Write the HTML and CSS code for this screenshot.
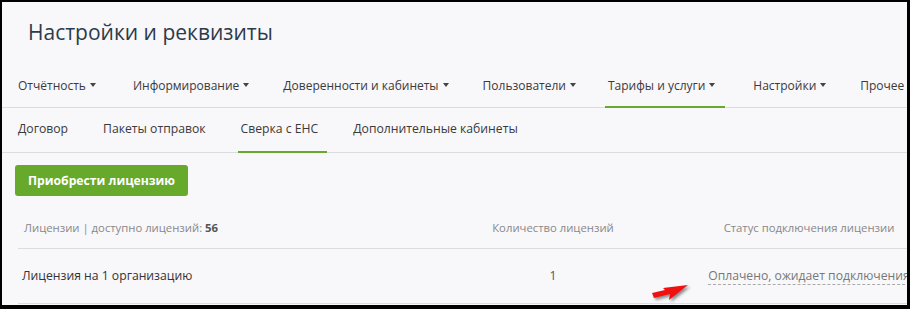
FILE: index.html
```html
<!DOCTYPE html>
<html lang="ru">
<head>
  <meta charset="UTF-8">
  <title>Настройки и реквизиты</title>
  <link rel="stylesheet" href="styles.css">
</head>
<body>
  <div class="page">
    <h1 class="title">Настройки и реквизиты</h1>

    <nav class="tabs tabs-main">
      <a class="tab has-menu">Отчётность</a>
      <a class="tab has-menu">Информирование</a>
      <a class="tab has-menu">Доверенности и кабинеты</a>
      <a class="tab has-menu">Пользователи</a>
      <a class="tab has-menu active">Тарифы и услуги</a>
      <a class="tab has-menu">Настройки</a>
      <a class="tab">Прочее</a>
    </nav>

    <nav class="tabs tabs-sub">
      <a class="tab">Договор</a>
      <a class="tab">Пакеты отправок</a>
      <a class="tab active">Сверка с ЕНС</a>
      <a class="tab">Дополнительные кабинеты</a>
    </nav>

    <div class="actions">
      <button class="btn-buy">Приобрести лицензию</button>
    </div>

    <table class="licenses">
      <thead>
        <tr>
          <th class="col-name">Лицензии | доступно лицензий: <b>56</b></th>
          <th class="col-count">Количество лицензий</th>
          <th class="col-status">Статус подключения лицензии</th>
        </tr>
      </thead>
      <tbody>
        <tr>
          <td class="col-name">Лицензия на 1 организацию</td>
          <td class="col-count">1</td>
          <td class="col-status"><span class="status">Оплачено, ожидает подключения</span></td>
        </tr>
      </tbody>
    </table>

    <!-- стрелка-указатель поверх таблицы -->
    <svg class="pointer" width="48" height="26" viewBox="0 0 48 26">
      <polygon points="6,13 19,10 17,8 42,5 23,20 24,14 8,18" fill="#f01010"/>
    </svg>
  </div>
</body>
</html>
```

FILE: styles.css
```css
:root {
  --bg-color: #f8f7fa;
  --text-color: #333;
  --muted-color: #888;
  --line-color: #dcdce0;
  --green: #67a92b;
}

html, body {
  margin: 0;
  background: #000;
}

.page {
  position: relative;
  margin: 2px 3px 0 2px;
  height: 303px;
  overflow: hidden;
  background: var(--bg-color);
  font-family: 'Open Sans', 'Noto Sans', sans-serif;
  color: var(--text-color);
}

.title {
  margin: 0 0 0 26px;
  padding-top: 15px;
  font-size: 21px;
  font-weight: 400;
  line-height: 30px;
  color: #2c3b4a;
}

.tabs {
  display: flex;
  padding-left: 13px;
  border-bottom: 1px solid var(--line-color);
  white-space: nowrap;
}

.tab {
  display: block;
  font-size: 12px;
  line-height: 20px;
  color: #3a3a3a;
  border-bottom: 2px solid transparent;
  margin-bottom: -1px;
}

.tab.active {
  border-bottom-color: var(--green);
}

.tabs-main {
  gap: 21px;
}

.tabs-main .tab {
  padding: 29px 10px 10px 3px;
}

.tabs-main .tab:nth-child(2) {
  margin-left: 3px;
}

.tabs-main .tab:nth-child(5) {
  margin-left: -2px;
}

.tabs-main .tab:nth-child(6) {
  margin-left: 4px;
}

.tabs-sub {
  gap: 23px;
}

.tabs-sub .tab {
  font-size: 12.2px;
  padding: 11px 9px 12px 3px;
}

.has-menu::after {
  content: "";
  display: inline-block;
  margin-left: 4px;
  vertical-align: 3px;
  border-left: 3.5px solid transparent;
  border-right: 3.5px solid transparent;
  border-top: 4px solid #444;
}

.actions {
  display: flex;
  padding: 12px 0 0 13px;
}

.btn-buy {
  box-sizing: border-box;
  height: 31px;
  width: 173px;
  padding: 0;
  border: none;
  border-radius: 3px;
  background: var(--green);
  color: #fff;
  font-family: inherit;
  font-size: 12.2px;
  font-weight: 700;
  white-space: nowrap;
  cursor: pointer;
}

.licenses {
  margin: 11px 0 0 16px;
  border-collapse: collapse;
  table-layout: fixed;
  width: 947px;
}

.licenses th,
.licenses td {
  box-sizing: border-box;
  border-bottom: 1px solid var(--line-color);
  white-space: nowrap;
  line-height: 20px;
}

.licenses th {
  padding: 11px 6px 10px;
  font-size: 11.3px;
  font-weight: 400;
  color: var(--muted-color);
}

.licenses th b {
  color: #555;
}

.licenses td {
  padding: 17px 4px 17px;
  font-size: 12.2px;
}

.col-name {
  width: 435px;
  text-align: left;
}

.col-count {
  width: 200px;
  text-align: center;
}

.col-status {
  width: 312px;
  text-align: center;
}

.licenses td.col-count {
  color: #555;
}

.status {
  color: #777;
  border-bottom: 1px dashed #aaa;
}

.pointer {
  position: absolute;
  left: 644px;
  top: 278px;
  filter: drop-shadow(2px 2px 1.5px rgba(0, 0, 0, 0.45));
}
```
